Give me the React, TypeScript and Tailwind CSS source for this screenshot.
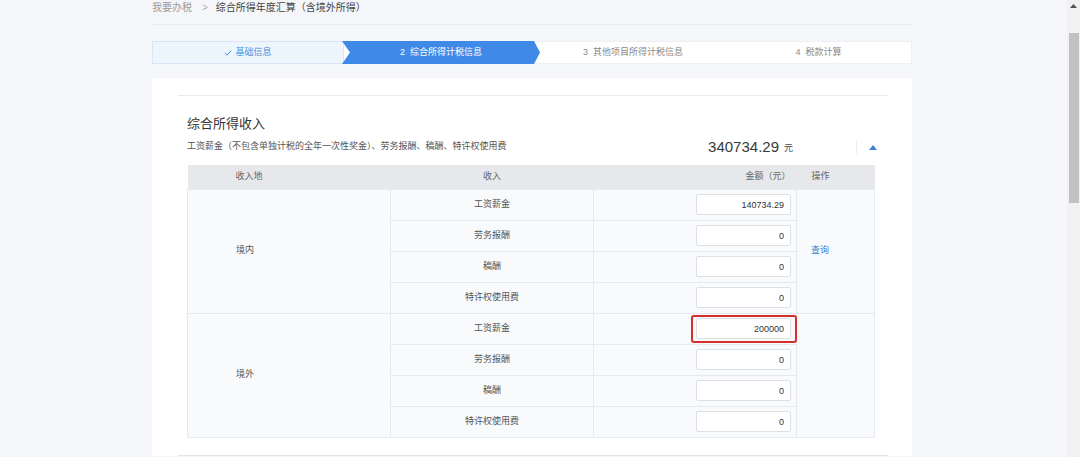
import React from 'react';

const font = "font-['Liberation_Sans','Noto_Sans_CJK_SC',sans-serif]";

type Row = { name: string; value: string; marked?: boolean };

const domestic: Row[] = [
  { name: '工资薪金', value: '140734.29' },
  { name: '劳务报酬', value: '0' },
  { name: '稿酬', value: '0' },
  { name: '特许权使用费', value: '0' },
];

const foreign: Row[] = [
  { name: '工资薪金', value: '200000', marked: true },
  { name: '劳务报酬', value: '0' },
  { name: '稿酬', value: '0' },
  { name: '特许权使用费', value: '0' },
];

const cell = 'border border-[#e6e9ee] bg-[#f9fafc]';

const AmountInput = ({ value, marked }: { value: string; marked?: boolean }) => (
  <div className="relative ml-auto w-[95px]">
    <input
      readOnly
      value={value}
      className="block h-[21px] w-full rounded-[2px] border border-[#dcdfe4] bg-white pr-[6px] text-right text-[9px] text-[#333] outline-none"
    />
    {marked && (
      <div className="pointer-events-none absolute -left-[5px] -right-[6px] -top-[3px] -bottom-[4px] rounded-[3px] border-2 border-[#d3302b]" />
    )}
  </div>
);

const Section = ({ place, rows, showQuery }: { place: string; rows: Row[]; showQuery?: boolean }) => (
  <>
    {rows.map((r, i) => (
      <tr key={r.name} className="h-[31px]">
        {i === 0 && (
          <td rowSpan={rows.length} className={`${cell} pl-[48px] text-left text-[9px] text-[#555]`}>
            {place}
          </td>
        )}
        <td className={`${cell} text-center text-[9px] text-[#555]`}>{r.name}</td>
        <td className={`${cell} pr-[5px]`}>
          <AmountInput value={r.value} marked={r.marked} />
        </td>
        {i === 0 && (
          <td rowSpan={rows.length} className={`${cell} pl-[14px] text-left text-[9px] text-[#3a7fd5]`}>
            {showQuery ? '查询' : ''}
          </td>
        )}
      </tr>
    ))}
  </>
);

const Steps = () => (
  <div className="mt-[16px] flex h-[23px] border border-[#eef0f3] bg-white text-[9px]">
    <div className="-my-px -ml-px flex w-[192px] items-center justify-center gap-[3px] border border-[#d8e7f8] bg-[#edf5fd] text-[#4a8ee2]">
      <svg width="8" height="6" viewBox="0 0 8 6" fill="none">
        <polyline points="0.8,3 3,5.2 7.2,0.8" stroke="#4a8ee2" strokeWidth="1" />
      </svg>
      <span>基础信息</span>
    </div>
    <div className="-my-px -ml-[2px] flex w-[198px] items-center justify-center bg-[#3f89e7] text-white [clip-path:polygon(0_0,calc(100%-6px)_0,100%_50%,calc(100%-6px)_100%,0_100%,8px_50%)]">
      <span>2&nbsp;&nbsp;综合所得计税信息</span>
    </div>
    <div className="flex w-[186px] items-center justify-center text-[#8a8a8a]">
      <span>3&nbsp;&nbsp;其他项目所得计税信息</span>
    </div>
    <div className="flex flex-1 items-center justify-center text-[#8a8a8a]">
      <span>4&nbsp;&nbsp;税款计算</span>
    </div>
  </div>
);

export default function App() {
  return (
    <div className={`${font} flex h-[457px] w-full overflow-hidden bg-[#f5f6f9]`}>
      <div className="flex-1 pl-[152px]">
        <div className="w-[760px]">
          <div className="flex h-[25px] items-start gap-[10px] border-b border-[#e9ebef] text-[10px] leading-[16px]">
            <span className="text-[#9a9a9a]">我要办税</span>
            <span className="text-[#aaa]">&gt;</span>
            <span className="-ml-[2px] text-[#444]">综合所得年度汇算（含境外所得）</span>
          </div>

          <Steps />

          <div className="mt-[14px] bg-white pl-[26px] pr-[24px] pt-[17px]">
            <div className="border-t border-[#e8eaee] pl-[9px] pr-[13px]">
              <div className="mt-[20px] text-[13px] leading-[16px] text-[#333]">综合所得收入</div>
              <div className="mt-[5px] flex items-center justify-between">
                <span className="text-[9px] text-[#555]">
                  工资薪金（不包含单独计税的全年一次性奖金）、劳务报酬、稿酬、特许权使用费
                </span>
                <div className="flex items-center">
                  <span className="text-[15px] leading-[20px] text-[#3a3a3a]">340734.29</span>
                  <span className="ml-[5px] mt-[4px] text-[9px] text-[#444]">元</span>
                  <span className="ml-[63px] h-[14px] w-px bg-[#eceef1]" />
                  <svg className="ml-[12px] mr-[-2px]" width="8" height="5" viewBox="0 0 8 5">
                    <polygon points="4,0 8,5 0,5" fill="#3d7fd6" />
                  </svg>
                </div>
              </div>

              <table className="mt-[8px] w-full table-fixed border-collapse">
                <colgroup>
                  <col className="w-[203px]" />
                  <col className="w-[203px]" />
                  <col className="w-[203px]" />
                  <col />
                </colgroup>
                <thead>
                  <tr className="h-[24px] bg-[#e6e8eb] text-[9px] text-[#666]">
                    <th className="pl-[48px] text-left font-normal">收入地</th>
                    <th className="text-center font-normal">收入</th>
                    <th className="pr-[6px] text-right font-normal">金额（元）</th>
                    <th className="pl-[15px] text-left font-normal">操作</th>
                  </tr>
                </thead>
                <tbody>
                  <Section place="境内" rows={domestic} showQuery />
                  <Section place="境外" rows={foreign} />
                </tbody>
              </table>

              <div className="h-[17px]" />
            </div>
            <div className="border-t border-[#e3e5e9]" />
          </div>
        </div>
      </div>

      <div className="relative w-[13px] bg-[#f1f1f1]">
        <svg className="absolute left-[3px] top-[4px]" width="7" height="4" viewBox="0 0 7 4">
          <polygon points="3.5,0 7,4 0,4" fill="#505050" />
        </svg>
        <div className="absolute left-[2px] right-px top-[33px] h-[170px] bg-[#c1c1c1]" />
      </div>
    </div>
  );
}
